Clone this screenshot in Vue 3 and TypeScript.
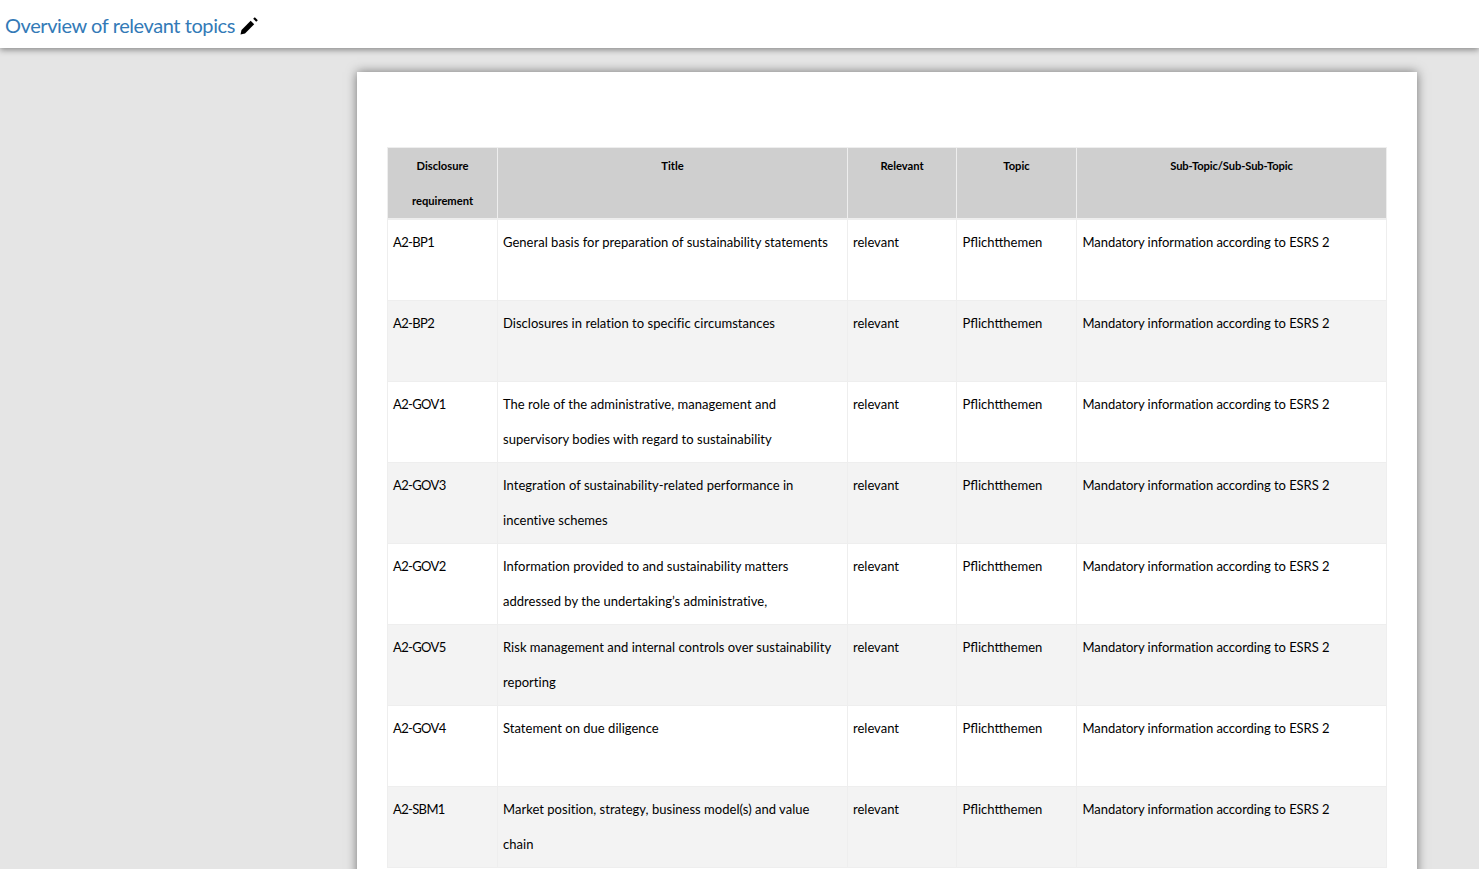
<script setup lang="ts">
interface Row {
  code: string;
  title: string[];
}

const rows: Row[] = [
  { code: 'A2-BP1', title: ['General basis for preparation of sustainability statements'] },
  { code: 'A2-BP2', title: ['Disclosures in relation to specific circumstances'] },
  { code: 'A2-GOV1', title: ['The role of the administrative, management and', 'supervisory bodies with regard to sustainability'] },
  { code: 'A2-GOV3', title: ['Integration of sustainability-related performance in', 'incentive schemes'] },
  { code: 'A2-GOV2', title: ['Information provided to and sustainability matters', 'addressed by the undertaking’s administrative,'] },
  { code: 'A2-GOV5', title: ['Risk management and internal controls over sustainability', 'reporting'] },
  { code: 'A2-GOV4', title: ['Statement on due diligence'] },
  { code: 'A2-SBM1', title: ['Market position, strategy, business model(s) and value', 'chain'] },
];
</script>

<template>
  <div class="app">
    <header class="topbar">
      <h1 class="heading">Overview of relevant topics</h1>
      <svg class="pencil" viewBox="0 0 18 18" aria-hidden="true">
        <path d="M0.5 17.5 1.5 13 10.7 3.8 14.2 7.3 5 16.5Z" />
        <path d="M13.2 1.8 14.8 0.2 17.8 3.2 16.2 4.8Z" />
      </svg>
    </header>
    <main class="stage">
      <article class="sheet">
        <table class="topics">
          <colgroup>
            <col class="c1" /><col class="c2" /><col class="c3" /><col class="c4" /><col class="c5" />
          </colgroup>
          <thead>
            <tr>
              <th>Disclosure<br />requirement</th>
              <th>Title</th>
              <th>Relevant</th>
              <th>Topic</th>
              <th class="narrow">Sub-Topic/Sub-Sub-Topic</th>
            </tr>
          </thead>
          <tbody>
            <tr v-for="row in rows" :key="row.code">
              <td class="code">{{ row.code }}</td>
              <td class="title">
                <div v-for="line in row.title" :key="line">{{ line }}</div>
              </td>
              <td>relevant</td>
              <td class="topic">Pflichtthemen</td>
              <td class="sub">Mandatory information according to ESRS 2</td>
            </tr>
          </tbody>
        </table>
      </article>
    </main>
  </div>
</template>

<style>
html,
body {
  margin: 0;
  height: 100%;
  overflow: hidden;
}
</style>

<style scoped>
.app {
  height: 100vh;
  display: flex;
  flex-direction: column;
  overflow: hidden;
  background: #e5e5e5;
  font-family: Lato, "Liberation Sans", sans-serif;
  color: #000;
}

.topbar {
  flex: none;
  position: relative;
  z-index: 2;
  height: 48px;
  display: flex;
  align-items: center;
  gap: 5px;
  padding-left: 5px;
  background: #fff;
  box-shadow: 0 2px 6px rgba(0, 0, 0, 0.4);
}

.heading {
  margin: 2px 0 0;
  font-size: 20px;
  font-weight: 400;
  letter-spacing: -0.42px;
  color: #337ab7;
}

.pencil {
  width: 18px;
  height: 18px;
  margin-top: 4px;
  fill: #000;
}

.stage {
  flex: 1;
  min-height: 0;
  padding: 24px 62px 0 357px;
}

.sheet {
  background: #fff;
  padding: 75px 30px 40px;
  box-shadow: 0 0 10px rgba(0, 0, 0, 0.5);
}

.topics {
  width: 1000px;
  table-layout: fixed;
  border-collapse: collapse;
  font-size: 13px;
  line-height: 35px;
}

.c1 { width: 110px; }
.c2 { width: 350px; }
.c3 { width: 109px; }
.c4 { width: 120px; }
.c5 { width: 310px; }

th,
td {
  border: 1px solid #eee;
  padding: 0 5px;
  vertical-align: top;
  text-align: left;
}

th {
  background: #cfcfcf;
  text-align: center;
  font-size: 11.2px;
  font-weight: 700;
  border-bottom: 2px solid #eee;
}

th.narrow {
  letter-spacing: -0.12px;
}

thead tr {
  height: 71px;
}

tbody tr {
  height: 81px;
}

tbody tr:nth-child(even) td {
  background: #f3f3f3;
}

td {
  padding-top: 5px;
  padding-bottom: 5px;
}

td.code {
  letter-spacing: -0.65px;
}

td.title {
  letter-spacing: 0.025px;
}

td.topic,
td.sub {
  padding-left: 5.5px;
}

td.sub {
  letter-spacing: -0.06px;
}
</style>
